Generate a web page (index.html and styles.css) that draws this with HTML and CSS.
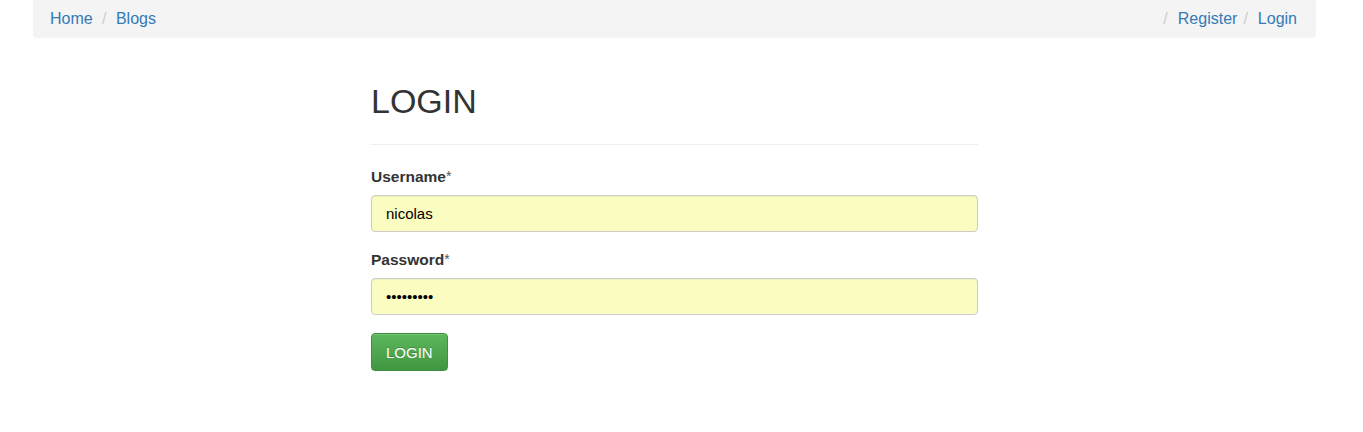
FILE: index.html
```html
<!DOCTYPE html>
<html lang="en">
<head>
<meta charset="utf-8">
<title>Login</title>
<link rel="stylesheet" href="styles.css">
</head>
<body>
<div class="page">
  <nav class="crumbs">
    <div class="crumb-list">
      <a class="crumb" href="#">Home</a>
      <span class="sep">/</span>
      <a class="crumb" href="#">Blogs</a>
    </div>
    <div class="crumb-list crumb-list-right">
      <span class="sep">/</span>
      <a class="crumb" href="#">Register</a>
      <span class="sep">/</span>
      <a class="crumb" href="#">Login</a>
    </div>
  </nav>
  <main class="main">
    <div class="column">
      <h1 class="title">LOGIN</h1>
      <div class="rule"></div>
      <form class="form">
        <label class="label" for="u">Username<span class="req">*</span></label>
        <input class="field" id="u" type="text" value="nicolas">
        <label class="label label-second" for="p">Password<span class="req">*</span></label>
        <input class="field" id="p" type="password" value="123456789">
        <div class="actions">
          <button class="btn" type="button">LOGIN</button>
        </div>
      </form>
    </div>
  </main>
</div>
</body>
</html>
```
FILE: styles.css
```css
html, body {
  margin: 0;
  padding: 0;
  background: #fff;
}
body {
  font-family: "Liberation Sans", Arial, sans-serif;
  font-size: 16px;
  color: #333;
}
.page {
  padding: 0 47px 0 33px;
}
.crumbs {
  height: 38px;
  background: #f4f4f4;
  border-radius: 0 0 4px 4px;
  display: flex;
  justify-content: space-between;
  align-items: center;
  padding: 0 19px 0 17px;
  font-size: 16px;
}
.crumb-list {
  display: flex;
  align-items: center;
}
.crumb {
  color: #337ab7;
  text-decoration: none;
}
.sep {
  color: #ccc;
  padding: 0 9.4px;
}
.crumb-list-right .sep {
  padding: 0 10px 0 6px;
}
.main {
  display: flex;
  justify-content: center;
}
.column {
  width: 607px;
}
.title {
  margin: 44px 0 0 0;
  font-size: 34px;
  font-weight: 400;
  line-height: 38px;
  color: #333;
}
.rule {
  margin-top: 24px;
  border-top: 1px solid #eee;
}
.form {
  display: flex;
  flex-direction: column;
  align-items: stretch;
  padding-top: 22px;
}
.label {
  font-size: 15.5px;
  font-weight: 700;
  line-height: 20px;
  color: #333;
  margin-bottom: 8px;
}
.label-second {
  margin-top: 18px;
}
.req {
  font-weight: 400;
  font-size: 14px;
  color: #555;
  vertical-align: top;
  position: relative;
  top: -1px;
}
.field {
  box-sizing: border-box;
  height: 37px;
  padding: 0 14px;
  border: 1px solid #ccc;
  border-radius: 4px;
  background: #fafcc0;
  font-family: "Liberation Sans", Arial, sans-serif;
  font-size: 15px;
  color: #000;
  box-shadow: inset 0 1px 1px rgba(0,0,0,.05);
  outline: none;
}
.actions {
  margin-top: 18px;
  display: flex;
}
.btn {
  box-sizing: border-box;
  height: 38px;
  padding: 0 14px;
  border: 1px solid #3e8f3e;
  border-radius: 4px;
  background: linear-gradient(to bottom, #5cb85c 0%, #419641 100%);
  color: #fff;
  font-family: "Liberation Sans", Arial, sans-serif;
  font-size: 15px;
  cursor: pointer;
  box-shadow: inset 0 1px 0 rgba(255,255,255,.15), 0 1px 1px rgba(0,0,0,.075);
  text-shadow: 0 -1px 0 rgba(0,0,0,.2);
}
```
